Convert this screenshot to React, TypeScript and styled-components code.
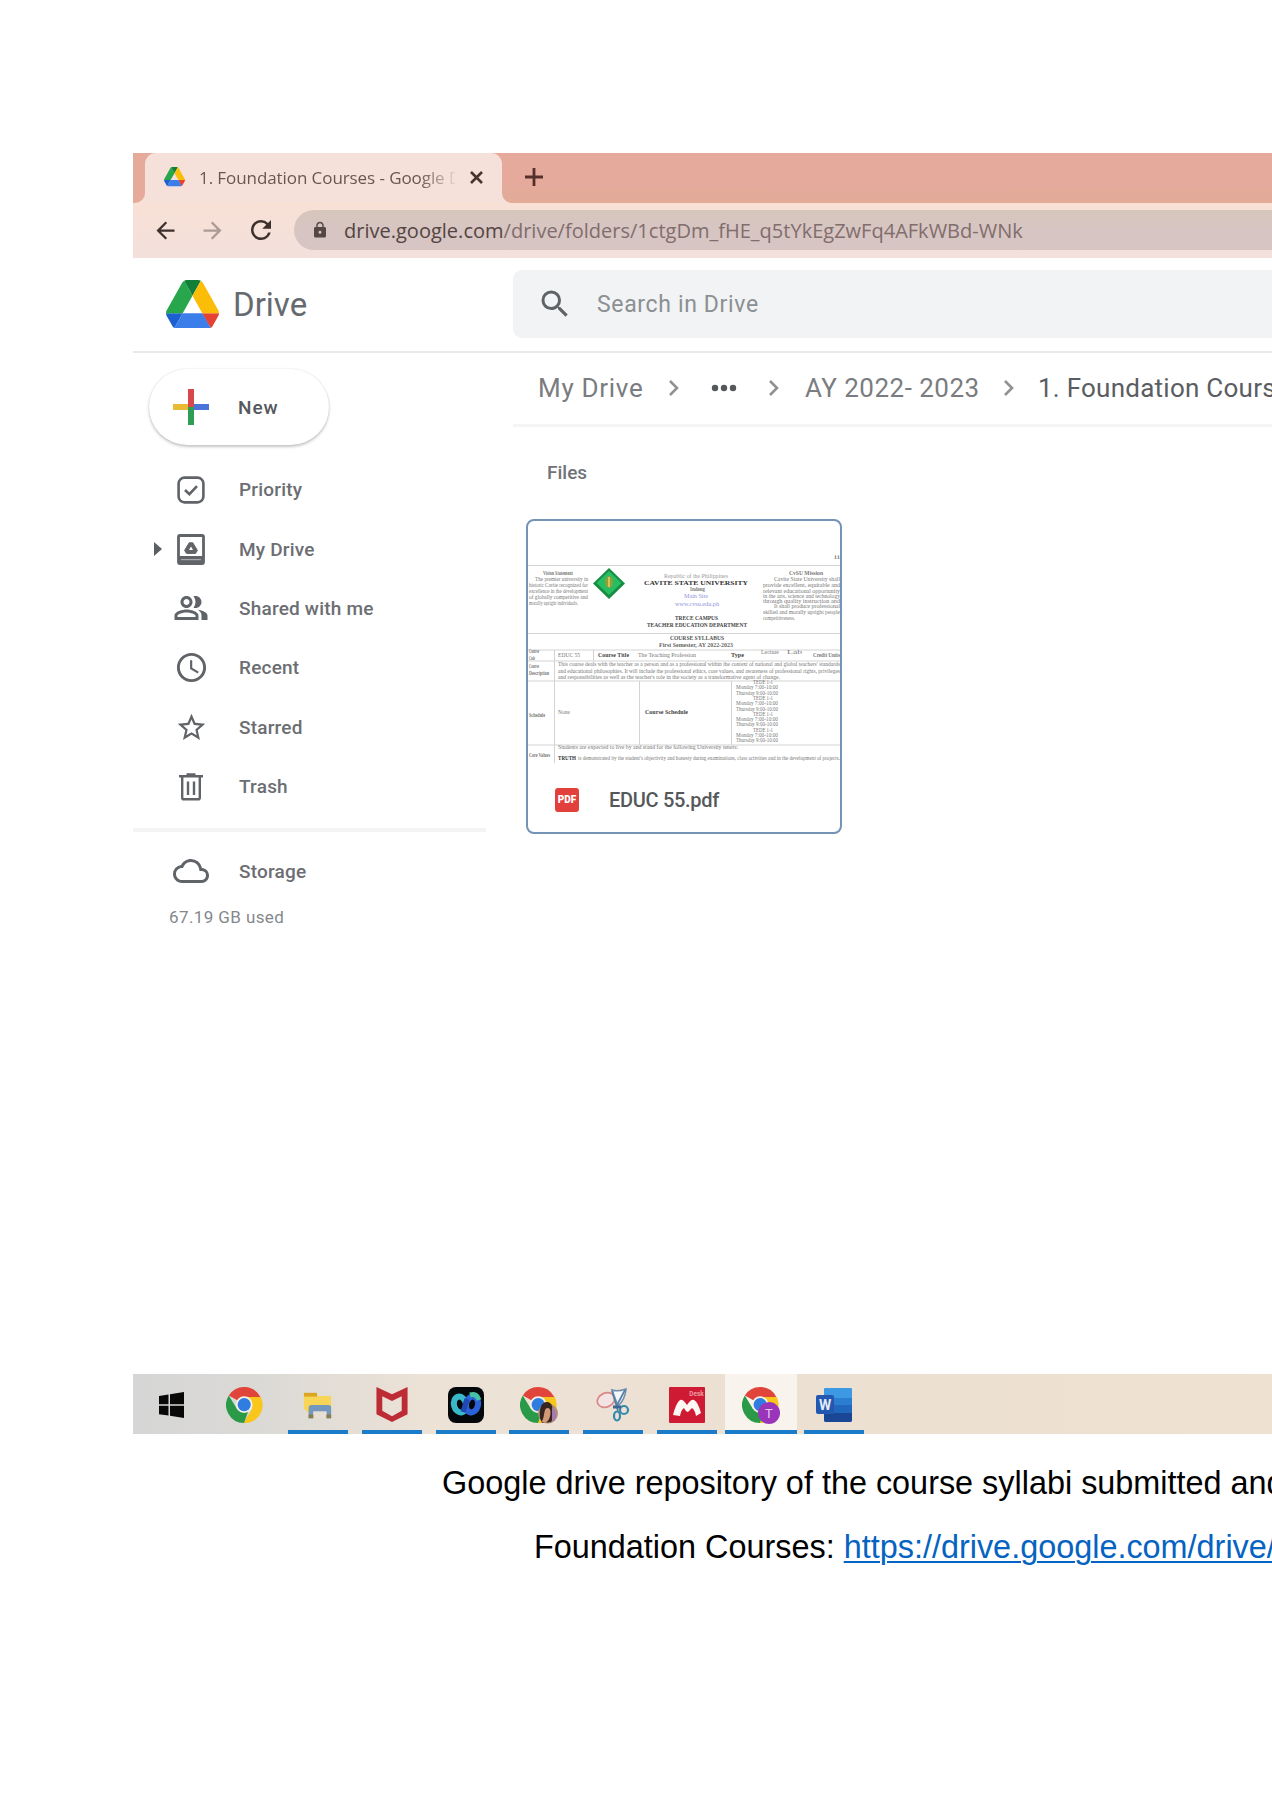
import React from "react";
import styled, { createGlobalStyle } from "styled-components";
import {
  MdAccessTime,
  MdArrowBack,
  MdArrowForward,
  MdLock,
  MdOutlineCloud,
  MdOutlinePeopleAlt,
  MdRefresh,
  MdSearch,
  MdStarBorder,
} from "react-icons/md";

const GlobalStyle = createGlobalStyle`
  * { box-sizing: border-box; }
  html, body { margin: 0; background: #fff; }
  svg { display: block; flex: none; }
`;

const ui = `Roboto, "Liberation Sans", sans-serif`;
const segoe = `"Open Sans", "Noto Sans", sans-serif`;

const Page = styled.main`
  width: 1272px;
  height: 1800px;
  overflow: hidden;
  padding: 153px 0 0 133px;
  background: #fff;
  font-family: ${ui};
`;

const Window = styled.section`
  display: flex;
  flex-direction: column;
  height: 1281px;
`;

/* Browser chrome */
const TabStrip = styled.div`
  display: flex;
  height: 50px;
  background: #f5e1d9;
`;

const StripEdge = styled.div`
  width: 12px;
  background: #e5aa99;
  border-bottom-right-radius: 10px;
`;

const TabHolder = styled.div`
  width: 357px;
  background: linear-gradient(#e5aa99 50%, #f5e1d9 50%);
`;

const Tab = styled.div`
  display: flex;
  align-items: center;
  height: 50px;
  padding: 0 13px 2px 19px;
  border-radius: 11px 11px 0 0;
  background: #f5e1d9;
`;

const TabTitle = styled.span`
  width: 256px;
  flex: none;
  margin-left: 14px;
  overflow: hidden;
  white-space: nowrap;
  font: 400 17px ${segoe};
  letter-spacing: -0.08px;
  color: #6a5650;
  mask-image: linear-gradient(90deg, #000 86%, rgba(0, 0, 0, 0.1));
`;

const TabClose = styled.div`
  margin-left: 15px;
`;

const StripRest = styled.div`
  flex: 1;
  display: flex;
  align-items: center;
  padding: 0 0 2px 23px;
  border-bottom-left-radius: 10px;
  background: linear-gradient(#e5aa9c 60%, #e1ab97);
`;

const Toolbar = styled.div`
  display: flex;
  align-items: center;
  height: 55px;
  padding: 0 0 1px 19px;
  background: linear-gradient(#f8e0d5, #f3e0dc);
`;

const NavIcon = styled.div<{ $faded?: boolean }>`
  width: 47px;
  stroke-width: 0.7px;
  stroke: currentColor;
  color: ${(p) => (p.$faded ? "#ab9994" : "#3c2f2c")};
`;

const Omnibox = styled.div`
  flex: 1;
  display: flex;
  align-items: center;
  height: 40px;
  margin-left: 1px;
  padding-left: 17px;
  border-radius: 20px 0 0 20px;
  background: linear-gradient(#d6c6bb, #d7c5c3 50%);
  color: #554743;
`;

const Url = styled.span`
  margin-left: 15px;
  white-space: nowrap;
  font: 400 20px ${segoe};
  letter-spacing: 0.01px;
  color: #816d6b;
`;

const Domain = styled.span`
  color: #54443f;
`;

/* Drive */
const DriveHeader = styled.header`
  display: flex;
  align-items: center;
  height: 95px;
  padding: 0 0 1px 33px;
  border-bottom: 2px solid #e9e9e9;
`;

const Brand = styled.div`
  display: flex;
  align-items: center;
  width: 347px;
`;

const BrandName = styled.span`
  margin-left: 14px;
  font-size: 33px;
  color: #666a6f;
`;

const SearchBox = styled.div`
  flex: 1;
  display: flex;
  align-items: center;
  height: 68px;
  padding-left: 24px;
  border-radius: 9px 0 0 9px;
  background: #f1f3f4;
  color: #5f6368;
`;

const Placeholder = styled.span`
  margin-left: 24px;
  font-size: 23px;
  letter-spacing: 0.65px;
  color: #8c8f92;
`;

const DriveBody = styled.div`
  flex: 1;
  display: flex;
`;

const Sidebar = styled.nav`
  flex: none;
  width: 353px;
  padding-top: 16px;
`;

const NewButton = styled.div`
  display: flex;
  align-items: center;
  width: 180px;
  height: 76px;
  margin: 0 0 15px 16px;
  padding-left: 24px;
  border-radius: 38px;
  background: #fff;
  box-shadow: 0 2px 3px rgba(60, 64, 67, 0.28), 0 0 2px rgba(60, 64, 67, 0.16);
`;

const NewLabel = styled.span`
  margin-left: 29px;
  font-weight: 500;
  font-size: 19px;
  letter-spacing: 0.9px;
  color: #55585c;
`;

const NavRow = styled.div`
  display: grid;
  grid-template-columns: 21px 15px 44px 26px 1fr;
  align-items: center;
  height: 59.4px;
  color: #606367;
`;

const CaretCell = styled.div`
  grid-column: 2;
`;

const IconCell = styled.div`
  grid-column: 3;
  display: flex;
  justify-content: center;
`;

const RowLabel = styled.span`
  grid-column: 5;
  font-weight: 500;
  font-size: 19px;
  letter-spacing: 0.2px;
  color: #6b6e72;
`;

const Divider = styled.hr`
  height: 4px;
  margin: 12px 0 9px;
  border: 0;
  background: #f4f4f4;
`;

const StorageUsed = styled.div`
  margin: 6px 0 0 36px;
  font-size: 17px;
  letter-spacing: 0.4px;
  color: #85888b;
`;

const Main = styled.div`
  flex: 1;
  min-width: 0;
  margin-left: 27px;
`;

const Breadcrumbs = styled.div`
  display: flex;
  align-items: center;
  height: 74px;
  padding: 0 0 2px 25px;
  border-bottom: 3px solid #f4f4f4;
  overflow: hidden;
`;

const Crumb = styled.span<{ $width: number; $spacing: number; $current?: boolean }>`
  flex: none;
  width: ${(p) => p.$width}px;
  white-space: nowrap;
  font-size: 26px;
  letter-spacing: ${(p) => p.$spacing}px;
  color: ${(p) => (p.$current ? "#5a5d61" : "#7a7c7f")};
`;

const CrumbMark = styled.div<{ $width: number }>`
  flex: none;
  display: flex;
  justify-content: center;
  width: ${(p) => p.$width}px;
`;

const SectionTitle = styled.h2`
  margin: 34px 0 34px 34px;
  font-weight: 500;
  font-size: 19px;
  line-height: 24px;
  color: #707377;
`;

const FileCard = styled.article`
  width: 316px;
  height: 315px;
  margin-left: 13px;
  overflow: hidden;
  border: 2px solid #7493b6;
  border-radius: 8px;
  background: #fff;
`;

const FileFooter = styled.div`
  display: flex;
  align-items: center;
  height: 68px;
  padding: 3px 0 0 27px;
`;

const PdfBadge = styled.div`
  width: 24px;
  height: 24px;
  border-radius: 3px;
  background: #e2403c;
  color: #fff;
  font-weight: 900;
  font-size: 10px;
  line-height: 24px;
  text-align: center;
`;

const FileName = styled.span`
  margin-left: 30px;
  font-weight: 500;
  font-size: 20px;
  letter-spacing: -0.3px;
  color: #55585b;
`;

/* Taskbar */
const Taskbar = styled.footer`
  display: flex;
  gap: 13.7px;
  height: 60px;
  padding-left: 8px;
  background: linear-gradient(90deg, #d6d6d6 0, #dad9d6 120px, #ece2d6 290px, #ece0d2 650px, #eee1d2 100%);
`;

const Task = styled.div<{ $running?: boolean; $active?: boolean }>`
  display: flex;
  align-items: center;
  justify-content: center;
  width: ${(p) => (p.$active ? 72 : 60)}px;
  padding-top: 5px;
  margin: ${(p) => (p.$active ? "0 -6px" : "0")};
  background: ${(p) => (p.$active ? "#f9f3ee" : "transparent")};
  border-bottom: 4px solid ${(p) => (p.$running ? "#1b7cc9" : "transparent")};
`;

/* Document caption */
const Caption = styled.p<{ $indent: number; $top: number }>`
  margin: ${(p) => p.$top}px 0 0 ${(p) => p.$indent}px;
  white-space: nowrap;
  font: 400 32.4px/40px "Liberation Sans", Arial, sans-serif;
  color: #000;
`;

const CaptionLink = styled.a`
  color: #0563c1;
  text-decoration: underline;
  text-decoration-thickness: 2px;
  text-underline-offset: 3px;
`;

const DriveLogo = ({ width }: { width: number }) => (
  <svg width={width} height={width * 0.92} viewBox="0 0 87.3 78" preserveAspectRatio="none">
    <path fill="#1c5fd0" d="m6.6 66.85 3.85 6.65c.8 1.4 1.95 2.5 3.3 3.3l13.75-23.8h-27.5c0 1.55.4 3.1 1.2 4.5z" />
    <path fill="#28a64b" d="m43.65 25-13.75-23.8c-1.35.8-2.5 1.9-3.3 3.3l-25.4 44a9.06 9.06 0 0 0 -1.2 4.5h27.5z" />
    <path fill="#e64234" d="m73.55 76.8c1.35-.8 2.5-1.9 3.3-3.3l1.6-2.75 7.65-13.25c.8-1.4 1.2-2.95 1.2-4.5h-27.5l5.85 11.5z" />
    <path fill="#127f38" d="m43.65 25 13.75-23.8c-1.35-.8-2.9-1.2-4.5-1.2h-18.5c-1.6 0-3.15.45-4.5 1.2z" />
    <path fill="#3b7de9" d="m59.8 53h-32.3l-13.75 23.8c1.35.8 2.9 1.2 4.5 1.2h50.8c1.6 0 3.15-.45 4.5-1.2z" />
    <path fill="#fcbd08" d="m73.4 26.5-12.7-22c-.8-1.4-1.95-2.5-3.3-3.3l-13.75 23.8 16.15 28h27.45c0-1.55-.4-3.1-1.2-4.5z" />
  </svg>
);

const Chevron = () => (
  <svg width="12" height="18" viewBox="0 0 12 18" fill="none" stroke="#8f9193" strokeWidth="2.6">
    <path d="M2 2l7 7-7 7" />
  </svg>
);

const PriorityIcon = () => (
  <svg width="28" height="28" viewBox="0 0 28 28" fill="none" stroke="currentColor" strokeWidth="2.6">
    <rect x="1.6" y="1.6" width="24.8" height="24.8" rx="6" />
    <path d="M8 14l4.4 4.2L20 10.2" />
  </svg>
);

const MyDriveIcon = () => (
  <svg width="28" height="31" viewBox="0 0 28 31" fill="none" stroke="currentColor">
    <rect x="1.5" y="1.5" width="25" height="28" rx="1.5" strokeWidth="2.8" />
    <path d="M1 25.5h26" strokeWidth="7" />
    <path d="M4 25.7h20" stroke="#b6b8ba" strokeWidth="1" />
    <path d="M12.2 8.8h3.6l4.6 7.6-1.900 3H9.5l-1.900-3z" strokeWidth="1" fill="currentColor" />
    <path d="M14 12.6l2 3.4h-4z" fill="#fff" stroke="none" />
  </svg>
);

const TrashIcon = () => (
  <svg width="24" height="28" viewBox="0 0 24 28" fill="none" stroke="currentColor" strokeWidth="2.4">
    <path d="M0 3.2h24M7.5 1.4h9" />
    <path d="M3.2 3.5v21.2q0 1.6 1.6 1.6h14.4q1.6 0 1.6-1.6V3.5" />
    <path d="M9 8.5v13.5M15 8.5v13.5" />
  </svg>
);

const ChromeMark = ({ badge }: { badge?: "photo" | "initial" }) => (
  <svg width="38" height="40" viewBox="0 0 38 40">
    <g transform="translate(0 1)">
      <path fill="#e0443a" d="M18 18L2.8 9.6A18 18 0 0 1 34 10.5L35 12H18z" />
      <path fill="#f9c61c" d="M18 11h16.7A18 18 0 0 1 17.5 37l9-15z" />
      <path fill="#2b9a48" d="M18 37A18 18 0 0 1 2.8 9.5L11 23l11 3z" />
      <circle cx="18.2" cy="18.6" r="8.4" fill="#f5f1e6" />
      <circle cx="18.2" cy="18.6" r="6.6" fill="#2f7de0" />
    </g>
    {badge === "photo" && (
      <g>
        <circle cx="28" cy="28.5" r="10" fill="#b08d78" />
        <path d="M20 33c-1-9 1-16 7-16 5 0 6 6 7 15l-3 5-9 1z" fill="#38251f" />
        <path d="M25.5 24c2-2 5-1 5 3s-1 6-2 8l-3 3-4-1c3-4 2-9 4-13z" fill="#d29a78" />
        <path d="M32 22q5 4 4 11l-4 4z" fill="#a57ab0" />
      </g>
    )}
    {badge === "initial" && (
      <g>
        <circle cx="27" cy="28" r="11" fill="#9a35bb" />
        <text x="27" y="32.5" fontSize="13" textAnchor="middle" fill="#e9c9f2" fontFamily="Roboto, sans-serif">
          T
        </text>
      </g>
    )}
  </svg>
);

const WindowsMark = () => (
  <svg width="26" height="26" viewBox="0 0 26 26" fill="#080808">
    <path d="M1 4l9.5-1.500v9.800H1zM12 2.200L26 0v12.300H12zM1 13.800h9.500v9.700L1 22.200zM12 13.800h14V26l-14-2.200z" />
  </svg>
);

const ExplorerMark = () => (
  <svg width="30" height="30" viewBox="0 0 32 32">
    <path d="M1 3.5h12l3 3h14v20H26V18H8v8L1 20z" fill="#f8d457" />
    <path d="M1 3h14v4H1z" fill="#dba520" />
    <path d="M6 30V19q0-3 3-3h18q3 0 3 3v11h-5v-7H11v7z" fill="#7397bd" />
    <path d="M11 30v-7h14v7z" fill="#e7ded4" />
    <path d="M6 26h5v4H6zM25 26h5v4h-5z" fill="#8a7c4d" />
  </svg>
);

const ShieldMark = () => (
  <svg width="32" height="35" viewBox="0 0 32 36">
    <path
      fillRule="evenodd"
      fill="#bd2b35"
      d="M0 0l16 7.5L32 0v28l-16 8-16-8zM6 9.5v15l10 5.5 10-5.5v-15l-10 5z"
    />
  </svg>
);

const WebexMark = () => (
  <svg width="36" height="36" viewBox="0 0 36 36" fill="none">
    <rect width="36" height="36" rx="8" fill="#05080b" />
    <ellipse cx="12" cy="17.5" rx="6" ry="8" stroke="#38b8c8" strokeWidth="6" transform="rotate(-14 12 17.5)" />
    <ellipse cx="24" cy="17.5" rx="6" ry="8" stroke="#2b62d8" strokeWidth="6" transform="rotate(14 24 17.5)" />
    <path d="M22 8q7-2 9 5" stroke="#45c0a4" strokeWidth="5" />
    <path d="M15 25l4-13" stroke="#2147b5" strokeWidth="5" />
  </svg>
);

const SnipMark = () => (
  <svg width="34" height="36" viewBox="0 0 34 36" fill="none">
    <ellipse cx="10" cy="13" rx="9" ry="7" fill="#f3e4e3" stroke="#db8787" strokeWidth="1.7" transform="rotate(-24 10 13)" />
    <path d="M16 3q6 2 14-1-1 11-8 17z" fill="#f4f8fb" stroke="#6e8fad" strokeWidth="1.6" />
    <path d="M16 4l6 20M29 3l-9 17" stroke="#577ea6" strokeWidth="1.7" />
    <circle cx="28" cy="23" r="4" stroke="#3689ad" strokeWidth="2.2" />
    <ellipse cx="21" cy="29" rx="3" ry="4.5" stroke="#3689ad" strokeWidth="2.2" />
    <path d="M17 20h8" stroke="#3c668f" strokeWidth="3" />
  </svg>
);

const MendeleyMark = () => (
  <svg width="36" height="36" viewBox="0 0 36 36">
    <rect width="36" height="36" rx="1" fill="#cf1a34" />
    <path
      d="M4 28q3-12 7-15 3-1 7 5 4-6 7-5 4 2 7 13l-5 3q-1-6-4-8l-4 4q-2 0-4-4-3 2-4 8z"
      fill="#fff7f4"
    />
    <text x="27.5" y="9" fontSize="6.5" fontWeight="700" textAnchor="middle" fill="#ee9aa0" fontFamily="Roboto, sans-serif">
      Desk
    </text>
  </svg>
);

const WordMark = () => (
  <svg width="36" height="34" viewBox="0 0 36 34">
    <rect x="8" width="28" height="34" rx="2" fill="#2167bd" />
    <path d="M10 0h24q2 0 2 2v8H8V2q0-2 2-2z" fill="#3d9ae2" />
    <path d="M8 10h28v7H8z" fill="#2b7dd2" />
    <path d="M8 25h28v7q0 2-2 2H10q-2 0-2-2z" fill="#194796" />
    <rect y="7" width="18" height="19" rx="2" fill="#2458b0" />
    <text x="9" y="21.5" fontSize="14" fontWeight="700" textAnchor="middle" fill="#e2ecf8" fontFamily="Roboto, sans-serif">
      W
    </text>
  </svg>
);

type ThumbLine = { x: number; y: number; w: number; t: string; bold?: boolean; fill?: string; size?: number };

const thumbLines: ThumbLine[] = [
  { x: 306, y: 40, w: 6, t: "ii" },
  { x: 15, y: 56, w: 30, t: "Vision Statement", bold: true },
  { x: 7, y: 62, w: 53, t: "The premier university in" },
  { x: 1, y: 68, w: 59, t: "historic Cavite recognized for" },
  { x: 1, y: 74, w: 59, t: "excellence in the development" },
  { x: 1, y: 80, w: 59, t: "of globally competitive and" },
  { x: 1, y: 85.5, w: 49, t: "morally upright individuals." },
  { x: 136, y: 59, w: 64, t: "Republic of the Philippines", fill: "#999" },
  { x: 116, y: 66, w: 104, t: "CAVITE STATE UNIVERSITY", bold: true, fill: "#333", size: 6.6 },
  { x: 162, y: 72, w: 15, t: "Indang", bold: true },
  { x: 156, y: 78.5, w: 24, t: "Main Site", fill: "#8f93dd" },
  { x: 147, y: 86.5, w: 44, t: "www.cvsu.edu.ph", fill: "#8f93dd" },
  { x: 147, y: 101, w: 43, t: "TRECE CAMPUS", bold: true, fill: "#444" },
  { x: 119, y: 107.5, w: 100, t: "TEACHER EDUCATION DEPARTMENT", bold: true, fill: "#444" },
  { x: 261, y: 56, w: 34, t: "CvSU Mission", bold: true },
  { x: 246, y: 62, w: 66, t: "Cavite State University shall" },
  { x: 235, y: 68, w: 77, t: "provide excellent, equitable and" },
  { x: 235, y: 73.5, w: 77, t: "relevant educational opportunity" },
  { x: 235, y: 79, w: 77, t: "in the arts, science and technology" },
  { x: 235, y: 84, w: 77, t: "through quality instruction and" },
  { x: 246, y: 89, w: 66, t: "It shall produce professional" },
  { x: 235, y: 95, w: 77, t: "skilled and morally upright people" },
  { x: 235, y: 101, w: 32, t: "competitiveness." },
  { x: 142, y: 121, w: 54, t: "COURSE SYLLABUS", bold: true, fill: "#555" },
  { x: 131, y: 127.5, w: 74, t: "First Semester, AY 2022-2023", bold: true, fill: "#666" },
  { x: 1, y: 134, w: 10, t: "Course", bold: true },
  { x: 1, y: 140.5, w: 6, t: "Code", bold: true },
  { x: 30, y: 137.5, w: 22, t: "EDUC 55" },
  { x: 70, y: 137.5, w: 31, t: "Course Title", bold: true, fill: "#444" },
  { x: 110, y: 137.5, w: 58, t: "The Teaching Profession" },
  { x: 203, y: 137.5, w: 13, t: "Type", bold: true, fill: "#444" },
  { x: 233, y: 134.5, w: 18, t: "Lecture" },
  { x: 259, y: 134.5, w: 15, t: "Lab" },
  { x: 285, y: 137.5, w: 27, t: "Credit Units", bold: true },
  { x: 1, y: 149, w: 10, t: "Course", bold: true },
  { x: 1, y: 156, w: 20, t: "Description", bold: true },
  { x: 30, y: 147, w: 282, t: "This course deals with the teacher as a person and as a professional within the context of national and global teachers' standards" },
  { x: 30, y: 153.5, w: 282, t: "and educational philosophies. It will include the professional ethics, core values, and awareness of professional rights, privileges" },
  { x: 30, y: 160, w: 222, t: "and responsibilities as well as the teacher's role in the society as a transformative agent of change." },
  { x: 1, y: 198, w: 16, t: "Schedule", bold: true },
  { x: 30, y: 195, w: 12, t: "None" },
  { x: 117, y: 195, w: 43, t: "Course Schedule", bold: true, fill: "#444" },
  { x: 30, y: 230, w: 180, t: "Students are expected to live by and stand for the following University tenets:" },
  { x: 1, y: 238, w: 21, t: "Core Values", bold: true },
  { x: 30, y: 240.5, w: 18, t: "TRUTH", bold: true, fill: "#333" },
  { x: 50, y: 240.5, w: 262, t: "is demonstrated by the student's objectivity and honesty during examinations, class activities and in the development of projects." },
];

const sections = ["TEDE 1-1", "Monday 7:00-10:00", "Thursday 9:00-10:00"];

const Thumbnail = () => (
  <svg width="312" height="243" viewBox="0 0 312 243" fontFamily="Liberation Serif, serif">
    <g stroke="#d3d3d3" strokeWidth="1">
      <path d="M0 44.5h312M0 112.5h312M0 129h312M0 140h312M0 160h312M0 224h312" />
      <path d="M26.5 129v113M65.5 129v11M111.5 160v64M203.5 160v64" />
    </g>
    <path d="M81 47l16 15.5-16 15.5-16-15.5z" fill="#178d42" />
    <path d="M81 50l12.5 12-12.5 12-12.5-12z" fill="#27bd63" />
    <ellipse cx="81" cy="61" rx="4" ry="6" fill="#8f9f3a" />
    <path d="M81 56v10" stroke="#e4d26a" strokeWidth="1.5" />
    <g transform="translate(0 -2)">
      {thumbLines.map((l, i) => (
        <text
          key={i}
          x={l.x}
          y={l.y}
          fontSize={l.size ?? 5.4}
          fontWeight={l.bold ? 700 : 400}
          fill={l.fill ?? "#777"}
          textLength={l.w}
          lengthAdjust="spacingAndGlyphs"
        >
          {l.t}
        </text>
      ))}
      {Array.from({ length: 12 }, (_, i) => (
        <text
          key={i}
          x={i % 3 === 0 ? 225 : 208}
          y={165 + i * 5.3}
          fontSize="5.2"
          fill="#777"
          textLength={i % 3 === 0 ? 20 : 42}
          lengthAdjust="spacingAndGlyphs"
        >
          {sections[i % 3]}
        </text>
      ))}
    </g>
  </svg>
);

const navItems = [
  { label: "Priority", icon: <PriorityIcon /> },
  { label: "My Drive", icon: <MyDriveIcon />, expandable: true },
  { label: "Shared with me", icon: <MdOutlinePeopleAlt size={36} /> },
  { label: "Recent", icon: <MdAccessTime size={35} /> },
  { label: "Starred", icon: <MdStarBorder size={33} /> },
  { label: "Trash", icon: <TrashIcon /> },
];

export default function App() {
  return (
    <Page>
      <GlobalStyle />
      <Window>
        <TabStrip>
          <StripEdge />
          <TabHolder>
            <Tab>
              <DriveLogo width={21} />
              <TabTitle>1. Foundation Courses - Google Drive</TabTitle>
              <TabClose>
                <svg width="13" height="13" viewBox="0 0 13 13" stroke="#4a332d" strokeWidth="2.6">
                  <path d="M1 1l11 11M12 1L1 12" />
                </svg>
              </TabClose>
            </Tab>
          </TabHolder>
          <StripRest>
            <svg width="18" height="18" viewBox="0 0 18 18" stroke="#55302a" strokeWidth="2.8">
              <path d="M9 0v18M0 9h18" />
            </svg>
          </StripRest>
        </TabStrip>
        <Toolbar>
          <NavIcon>
            <MdArrowBack size={27} />
          </NavIcon>
          <NavIcon $faded>
            <MdArrowForward size={27} />
          </NavIcon>
          <NavIcon>
            <MdRefresh size={30} />
          </NavIcon>
          <Omnibox>
            <MdLock size={18} />
            <Url>
              <Domain>drive.google.com</Domain>/drive/folders/1ctgDm_fHE_q5tYkEgZwFq4AFkWBd-WNk
            </Url>
          </Omnibox>
        </Toolbar>

        <DriveHeader>
          <Brand>
            <DriveLogo width={53} />
            <BrandName>Drive</BrandName>
          </Brand>
          <SearchBox>
            <MdSearch size={36} />
            <Placeholder>Search in Drive</Placeholder>
          </SearchBox>
        </DriveHeader>

        <DriveBody>
          <Sidebar>
            <NewButton>
              <svg width="36" height="36" viewBox="0 0 36 36">
                <path fill="#d8474a" d="M15 0h6v18h-6z" />
                <path fill="#e9bb35" d="M0 15h15v6H0z" />
                <path fill="#4a74dc" d="M21 15h15v6H21z" />
                <path fill="#2f9e55" d="M15 18h6v18h-6z" />
              </svg>
              <NewLabel>New</NewLabel>
            </NewButton>
            {navItems.map((item) => (
              <NavRow key={item.label}>
                {item.expandable && (
                  <CaretCell>
                    <svg width="8" height="14" viewBox="0 0 8 14" fill="#5c5f62">
                      <path d="M0 0l8 7-8 7z" />
                    </svg>
                  </CaretCell>
                )}
                <IconCell>{item.icon}</IconCell>
                <RowLabel>{item.label}</RowLabel>
              </NavRow>
            ))}
            <Divider />
            <NavRow>
              <IconCell>
                <MdOutlineCloud size={36} />
              </IconCell>
              <RowLabel>Storage</RowLabel>
            </NavRow>
            <StorageUsed>67.19 GB used</StorageUsed>
          </Sidebar>

          <Main>
            <Breadcrumbs>
              <Crumb $width={105} $spacing={0.7}>
                My Drive
              </Crumb>
              <CrumbMark $width={62}>
                <Chevron />
              </CrumbMark>
              <CrumbMark $width={38}>
                <svg width="26" height="8" viewBox="0 0 26 8" fill="#55585b">
                  <circle cx="4" cy="4" r="3.2" />
                  <circle cx="13" cy="4" r="3.2" />
                  <circle cx="22" cy="4" r="3.2" />
                </svg>
              </CrumbMark>
              <CrumbMark $width={62}>
                <Chevron />
              </CrumbMark>
              <Crumb $width={175} $spacing={0.48}>
                AY 2022- 2023
              </Crumb>
              <CrumbMark $width={58}>
                <Chevron />
              </CrumbMark>
              <Crumb $width={260} $spacing={0.25} $current>
                1. Foundation Courses
              </Crumb>
            </Breadcrumbs>
            <SectionTitle>Files</SectionTitle>
            <FileCard>
              <Thumbnail />
              <FileFooter>
                <PdfBadge>PDF</PdfBadge>
                <FileName>EDUC 55.pdf</FileName>
              </FileFooter>
            </FileCard>
          </Main>
        </DriveBody>

        <Taskbar>
          <Task>
            <WindowsMark />
          </Task>
          <Task>
            <ChromeMark />
          </Task>
          <Task $running>
            <ExplorerMark />
          </Task>
          <Task $running>
            <ShieldMark />
          </Task>
          <Task $running>
            <WebexMark />
          </Task>
          <Task $running>
            <ChromeMark badge="photo" />
          </Task>
          <Task $running>
            <SnipMark />
          </Task>
          <Task $running>
            <MendeleyMark />
          </Task>
          <Task $running $active>
            <ChromeMark badge="initial" />
          </Task>
          <Task $running>
            <WordMark />
          </Task>
        </Taskbar>
      </Window>
      <Caption $indent={309} $top={29}>
        Google drive repository of the course syllabi submitted and
      </Caption>
      <Caption $indent={401} $top={24}>
        Foundation Courses: <CaptionLink>https://drive.google.com/drive/folders</CaptionLink>
      </Caption>
    </Page>
  );
}
